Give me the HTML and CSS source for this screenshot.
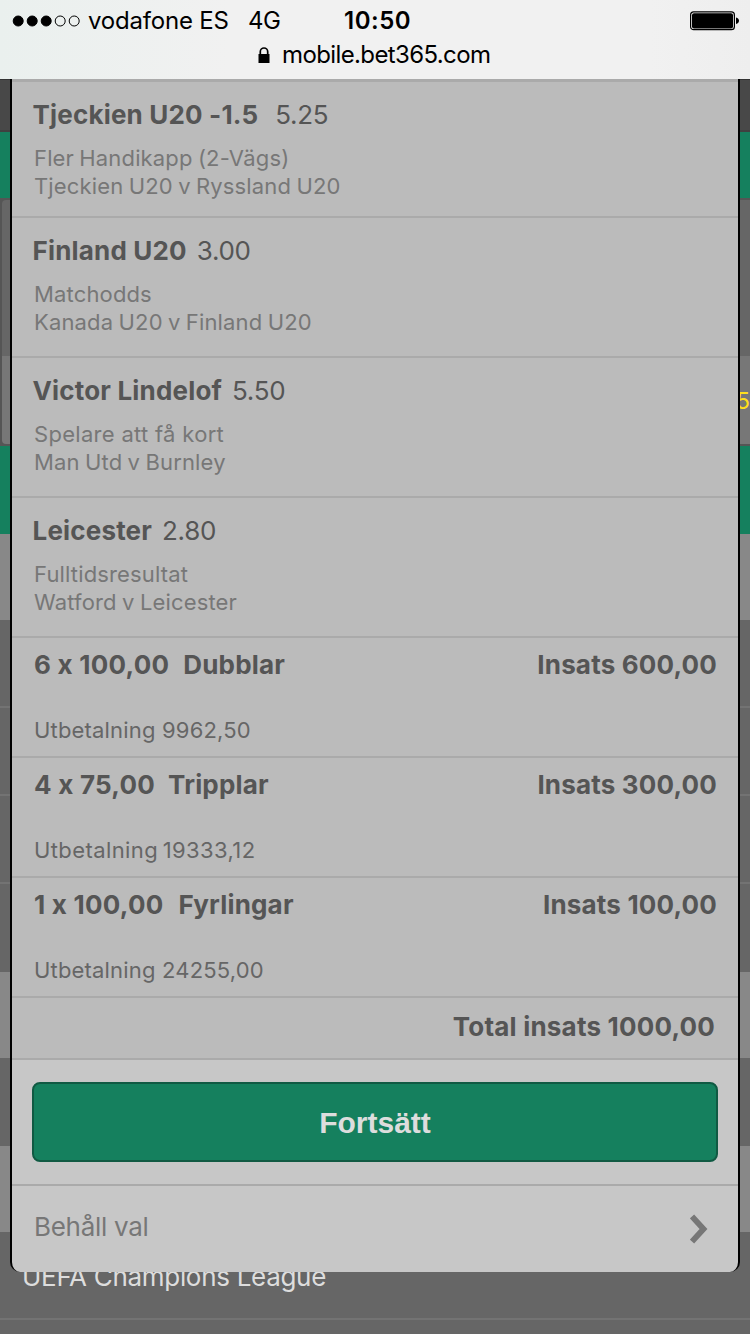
FILE: index.html
```html
<!DOCTYPE html>
<html lang="sv">
<head>
<meta charset="utf-8">
<title>mobile.bet365.com</title>
<link rel="stylesheet" href="styles.css">
</head>
<body>
<div class="screen">
  <header class="browser-bar">
    <div class="status">
      <svg class="signal" width="70" height="12" viewBox="0 0 70 12"><g stroke="#000" stroke-width="1"><circle cx="6.200" cy="6" r="5"/><circle cx="20.200" cy="6" r="5"/><circle cx="34.200" cy="6" r="5"/><circle cx="48.200" cy="6" r="5" fill="none"/><circle cx="62.200" cy="6" r="5" fill="none"/></g></svg>
      <span class="carrier">vodafone ES</span>
      <span class="network">4G</span>
      <span class="clock">10:50</span>
      <svg class="battery" width="50" height="20" viewBox="0 0 50 20"><rect x=".6" y=".9" width="43.8" height="17.8" rx="3" fill="none" stroke="#000" stroke-width="1.2"/><rect x="2" y="2.2" width="41" height="15.2" rx="2"/><path d="M46 6.500c4 1 4 5.500 0 6.500z"/></svg>
    </div>
    <div class="address">
      <svg class="lock" width="12" height="17" viewBox="0 0 12 17"><path d="M2.300 8V4.700a3.700 3.700 0 0 1 7.400 0V8" fill="none" stroke="#000" stroke-width="1.700"/><rect x=".5" y="7" width="11" height="9"/></svg>
      <span class="host">mobile.bet365.com</span>
    </div>
  </header>
  <main class="page">
    <div class="band nav"></div>
    <div class="band green tabs"></div>
    <div class="promo"><div class="promo-card"><div class="promo-top"></div><div class="promo-odds"><span>5</span></div></div></div>
    <div class="band green title-bar"></div>
    <div class="band light"></div>
    <div class="band row"></div>
    <div class="band row"></div>
    <div class="band row"></div>
    <div class="band row last"></div>
    <div class="band light"></div>
    <div class="band row last"></div>
    <div class="band light"></div>
    <div class="band row league"><span>UEFA Champions League</span></div>
    <div class="band rest"></div>
  </main>
  <section class="betslip">
    <article class="pick first"><h2><span class="name">Tjeckien U20 -1.5</span><span class="odds wide">5.25</span></h2><p>Fler Handikapp (2-Vägs)</p><p>Tjeckien U20 v Ryssland U20</p></article>
    <article class="pick"><h2><span class="name">Finland U20</span><span class="odds">3.00</span></h2><p>Matchodds</p><p>Kanada U20 v Finland U20</p></article>
    <article class="pick"><h2><span class="name">Victor Lindelof</span><span class="odds">5.50</span></h2><p class="loose">Spelare att få kort</p><p>Man Utd v Burnley</p></article>
    <article class="pick"><h2><span class="name">Leicester</span><span class="odds">2.80</span></h2><p>Fulltidsresultat</p><p>Watford v Leicester</p></article>
    <article class="multi"><div class="stake"><span class="count">6 x 100,00</span><span class="kind">Dubblar</span><span class="amount">Insats 600,00</span></div><p>Utbetalning 9962,50</p></article>
    <article class="multi triples"><div class="stake"><span class="count">4 x 75,00</span><span class="kind">Tripplar</span><span class="amount">Insats 300,00</span></div><p>Utbetalning 19333,12</p></article>
    <article class="multi singles"><div class="stake"><span class="count">1 x 100,00</span><span class="kind">Fyrlingar</span><span class="amount">Insats 100,00</span></div><p>Utbetalning 24255,00</p></article>
    <div class="total"><span>Total insats 1000,00</span></div>
    <div class="action"><button class="continue">Fortsätt</button></div>
    <div class="keep"><span>Behåll val</span><svg width="18" height="30" viewBox="0 0 18 30"><path d="M2 2.500 13.500 15 2 27.500" fill="none" stroke="#777" stroke-width="5.800"/></svg></div>
  </section>
</div>
</body>
</html>
```
FILE: styles.css
```css
* { box-sizing: border-box; }
body { margin: 0; font-family: Inter, "Liberation Sans", sans-serif; font-feature-settings: "calt" 0; }
h2, p { margin: 0; font-weight: 400; }
span { white-space: nowrap; }
.screen { position: relative; width: 750px; height: 1334px; overflow: hidden; background: #666; display: flex; flex-direction: column; }

.browser-bar { height: 79px; flex: none; background: linear-gradient(90deg, #eaf0ee 0, #f1f1f1 230px, #f1f1f1 650px, #eee 100%); color: #000; font-size: 24px; }
.status { display: grid; grid-template-columns: 76px 160px 96px 346px 50px; height: 41px; padding-left: 12px; align-items: center; line-height: 41px; }
.carrier { letter-spacing: -.2px; }
.network { letter-spacing: -.5px; }
.clock { font-weight: 600; letter-spacing: .5px; }
.address { display: flex; height: 30px; align-items: center; padding-left: 258px; line-height: 30px; margin-top: -1px; }
.host { margin-left: 12px; letter-spacing: -.62px; }

.page { display: flex; flex-direction: column; flex: 1; }
.band { flex: none; width: 100%; }
.nav { height: 53px; background: #484848; border-top: 1px solid #333; border-bottom: 2px solid #404040; }
.green { background: #15805e; }
.tabs { height: 66px; }
.promo { height: 248px; padding: 2px 0 2px 2px; background: #555; flex: none; }
.promo-card { height: 244px; border-radius: 4px 0 0 4px; overflow: hidden; }
.promo-top { height: 156px; background: #666; }
.promo-odds { height: 88px; background: #777; color: #ffdf1b; font-size: 23px; line-height: 91px; text-align: right; }
.title-bar { height: 88px; }
.light { height: 86px; background: #888; }
.row { height: 88px; background: #666; border-bottom: 2px solid #737373; }
.row.last { border-bottom: 0; }
.league { color: #ddd; font-size: 26px; line-height: 90px; padding-left: 22px; letter-spacing: -.3px; }
.rest { height: 14px; background: #666; }

.betslip { position: absolute; left: 10px; top: 79px; width: 730px; height: 1193px; border: solid #000; border-width: 0 2px; border-radius: 0 0 10px 10px; background: #c7c7c7; overflow: hidden; color: #555; }
.pick { height: 140px; background: #bbb; border-bottom: 2px solid #aaa; padding: 13px 22px 0; }
.pick.first { height: 139px; border-top: 3px solid #aaa; }
.pick h2 { display: flex; height: 40px; line-height: 40px; font-size: 26px; margin-left: -1.500px; }
.name { font-weight: 700; letter-spacing: .18px; }
.odds { margin-left: 10px; letter-spacing: -.3px; }
.odds.wide { margin-left: 17px; }
.pick p { font-size: 22px; line-height: 28px; color: #777; letter-spacing: .15px; word-spacing: -1px; }
.pick p.loose { letter-spacing: .3px; word-spacing: 0; }
.pick h2 + p { margin-top: 9px; }
.multi { height: 120px; background: #bbb; border-bottom: 2px solid #aaa; padding: 7px 21px 0 22px; }
.stake { display: flex; height: 40px; line-height: 40px; font-size: 26px; font-weight: 700; letter-spacing: .18px; }
.count { letter-spacing: .25px; }
.kind { margin-left: 14px; }
.triples .kind { margin-left: 13px; }
.singles .kind { margin-left: 15px; }
.amount { margin-left: auto; }
.multi p { margin-top: 31px; font-size: 22px; line-height: 28px; color: #666; letter-spacing: .18px; }
.multi.triples p { letter-spacing: .4px; word-spacing: -2px; }
.total { height: 62px; background: #bbb; border-bottom: 2px solid #aaa; padding-right: 23px; font-size: 26px; font-weight: 700; line-height: 58px; text-align: right; letter-spacing: .2px; }
.action { height: 126px; padding: 22px 20px; border-bottom: 2px solid #aaa; }
.continue { display: block; width: 100%; height: 80px; padding: 1px 0 0; border: 2px solid #105a43; border-radius: 8px; background: #15805e; color: #ddd; font: 700 30px/75px "Liberation Sans", sans-serif; }
.keep { height: 86px; display: flex; align-items: center; justify-content: space-between; padding: 0 30px 0 22px; font-size: 26px; color: #777; line-height: 82px; letter-spacing: -.3px; }
.keep span { margin-top: -4px; }
```
